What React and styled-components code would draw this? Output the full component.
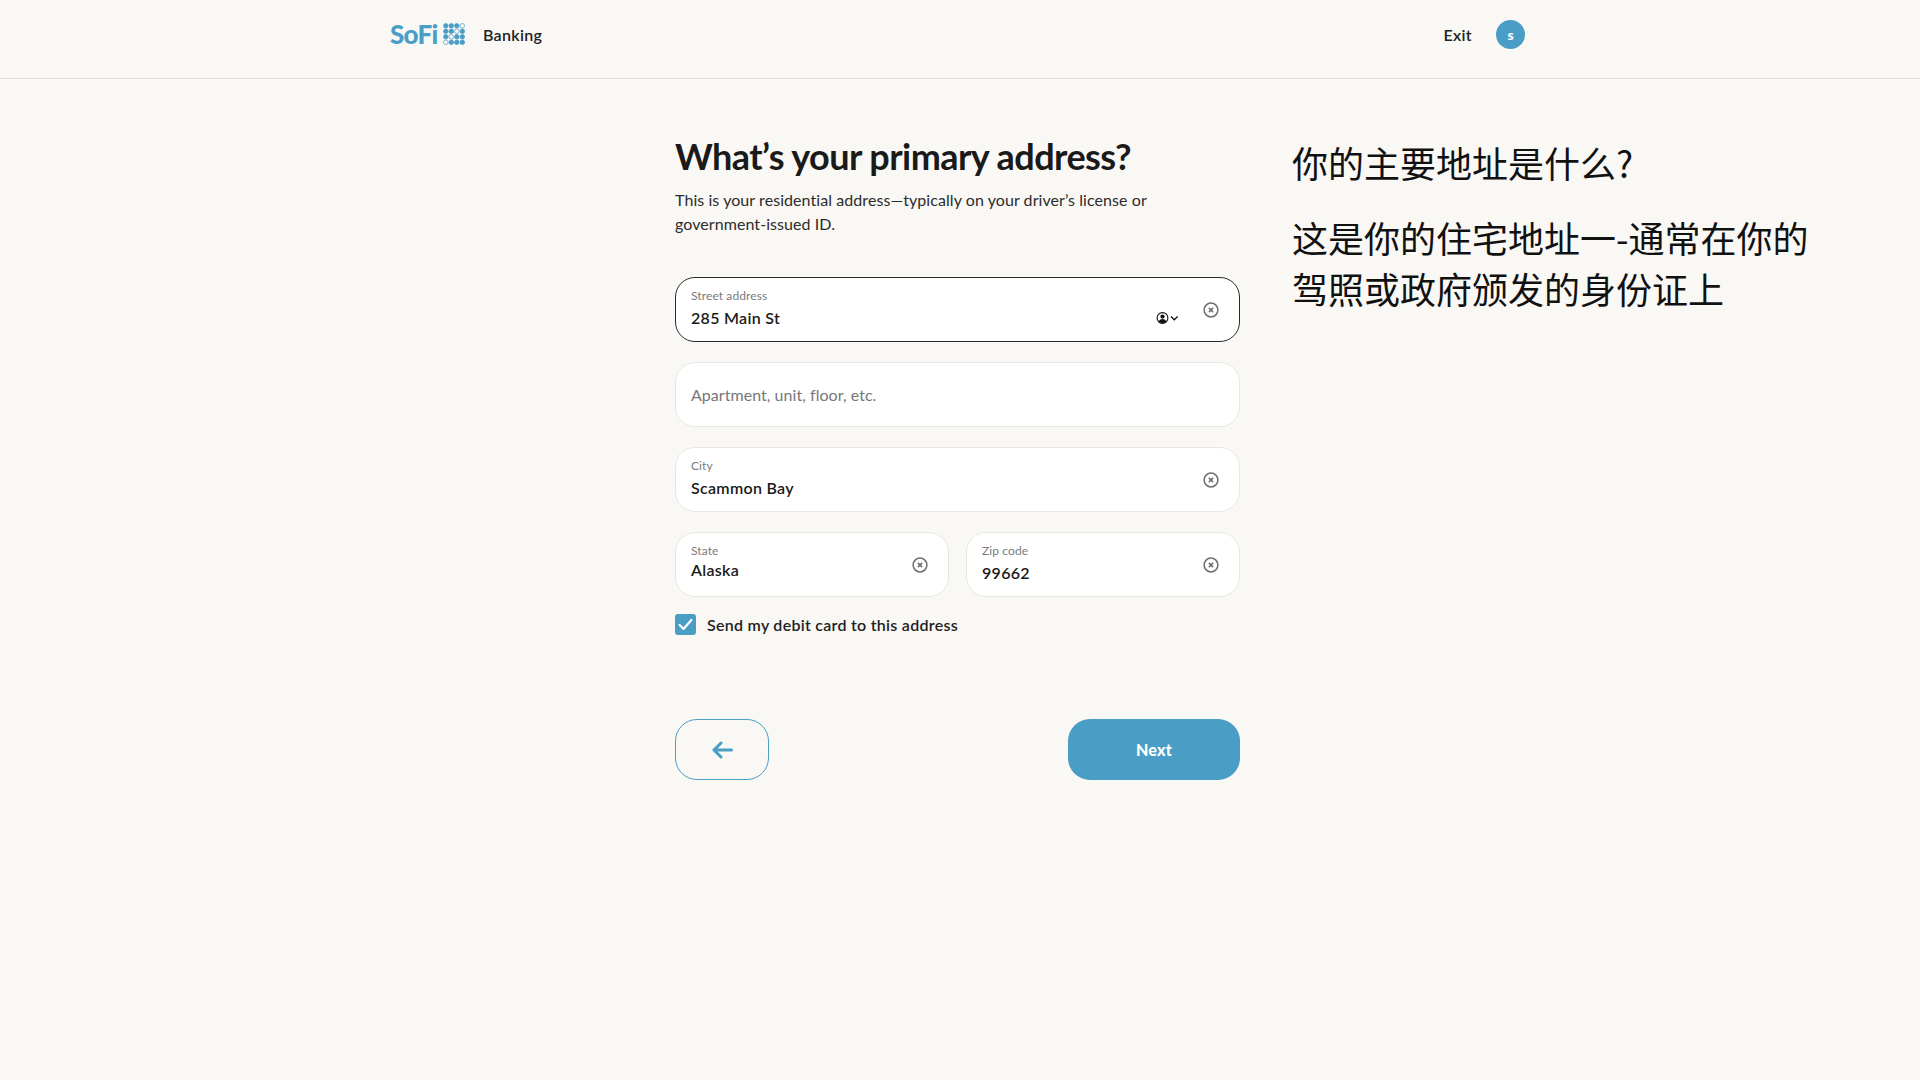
import React from "react";
import styled, { createGlobalStyle } from "styled-components";

const GlobalStyle = createGlobalStyle`
  html, body {
    margin: 0;
    min-height: 100%;
    background: #f9f8f5;
  }
  body {
    font-family: "Lato", "Noto Sans CJK SC", sans-serif;
    color: #1a1a1a;
  }
`;

const Page = styled.div`
  min-height: 1080px;
  background: #f9f8f5;
`;

const Header = styled.header`
  height: 79px;
  box-sizing: border-box;
  border-bottom: 1px solid #e1e0dc;
  padding: 0 395px 10px 390px;
  display: flex;
  align-items: center;
  justify-content: space-between;
`;

const HeaderSide = styled.div`
  display: flex;
  align-items: center;
  gap: ${props => props.gap}px;
`;

const LogoWrap = styled.div`
  display: flex;
  align-items: center;
  gap: 5px;
  width: 76px;
`;

const LogoText = styled.span`
  font-size: 26px;
  font-weight: 900;
  letter-spacing: -0.7px;
  color: #4a9ec6;
`;

const HeaderLink = styled.span`
  font-size: 16px;
  font-weight: 600;
  letter-spacing: 0.3px;
  color: #222;
`;

const BrandLink = styled(HeaderLink)`
  margin-left: 1px;
`;

const Avatar = styled.div`
  width: 29px;
  height: 29px;
  border-radius: 50%;
  background: #4a9ec6;
  color: #fff;
  font-size: 14px;
  font-weight: 900;
  display: flex;
  align-items: center;
  justify-content: center;
`;

const Main = styled.main`
  display: flex;
  gap: 52px;
  padding: 52px 0 0 675px;
`;

const FormColumn = styled.div`
  width: 565px;
`;

const Heading = styled.h1`
  margin: 0;
  font-size: 36px;
  line-height: 50px;
  font-weight: 700;
  letter-spacing: -0.55px;
  color: #1a1a1a;
`;

const Lead = styled.p`
  margin: 7px 0 0;
  font-size: 16px;
  line-height: 24px;
  letter-spacing: 0.07px;
  color: #2c2c2c;
`;

const Fields = styled.div`
  margin-top: 41px;
  display: flex;
  flex-direction: column;
  gap: 20px;
`;

const FieldRow = styled.div`
  display: grid;
  grid-template-columns: 1fr 1fr;
  gap: 17px;
`;

const FieldBox = styled.div`
  height: 65px;
  box-sizing: border-box;
  background: #fff;
  border: 1px solid ${props => props.active ? "#2a2a2a" : "#e8e7e3"};
  border-radius: 20px;
  padding: 0 20px 0 15px;
  display: flex;
  align-items: center;
  gap: 23px;
`;

const FieldText = styled.div`
  flex: 1;
  min-width: 0;
  align-self: flex-start;
  padding-top: 10px;
`;

const FieldLabel = styled.div`
  font-size: 12px;
  line-height: 16px;
  letter-spacing: 0.1px;
  color: #7b7b7b;
`;

const FieldValue = styled.div`
  margin-top: ${props => props.offset}px;
  font-size: 16px;
  line-height: 20px;
  font-weight: 600;
  letter-spacing: 0.3px;
  color: #1a1a1a;
`;

const Placeholder = styled.div`
  font-size: 16px;
  letter-spacing: 0.04px;
  color: #777;
`;

const AutofillIcon = styled.div`
  display: flex;
  align-items: center;
  margin-top: 16px;
`;

const CheckRow = styled.label`
  margin-top: 17px;
  display: flex;
  align-items: center;
  gap: 11px;
`;

const CheckBox = styled.span`
  width: 21px;
  height: 21px;
  border-radius: 3px;
  background: #4a9ec6;
  display: flex;
  align-items: center;
  justify-content: center;
`;

const CheckText = styled.span`
  font-size: 16px;
  font-weight: 600;
  letter-spacing: 0.27px;
  color: #222;
`;

const Actions = styled.div`
  margin-top: 84px;
  display: flex;
  justify-content: space-between;
`;

const BackButton = styled.button`
  width: 94px;
  height: 61px;
  border: 1px solid #4a9ec6;
  border-radius: 22px;
  background: transparent;
  display: flex;
  align-items: center;
  justify-content: center;
  padding: 0;
`;

const NextButton = styled.button`
  width: 172px;
  height: 61px;
  border: 0;
  border-radius: 22px;
  background: #4a9ec6;
  color: #fff;
  font-family: inherit;
  font-size: 16px;
  font-weight: 900;
  letter-spacing: 0.2px;
`;

const Translation = styled.div`
  width: 530px;
  padding-top: 6px;
  font-family: "Noto Sans CJK SC", sans-serif;
  font-size: 36px;
  line-height: 51px;
  color: #111;
`;

const TranslationBlock = styled.p`
  margin: 0 0 24px;
`;

const dots = [
  [1, 1, 1, 0],
  [1, 1, 0, 1],
  [1, 0, 1, 1],
  [0, 1, 1, 1],
];

const LogoDots = () => (
  <svg width="22" height="22" viewBox="0 0 22 22">
    {dots.map((row, y) =>
      row.map((filled, x) => (
        <circle
          key={`${x}-${y}`}
          cx={2.8 + x * 5.5}
          cy={2.8 + y * 5.5}
          r="2.3"
          fill={filled ? "#4a9ec6" : "none"}
          stroke="#4a9ec6"
          strokeWidth="0.7"
        />
      ))
    )}
  </svg>
);

const ClearIcon = () => (
  <svg width="16" height="16" viewBox="0 0 16 16" fill="none" stroke="#6f6f6f">
    <circle cx="8" cy="8" r="6.9" strokeWidth="1.5" />
    <path d="M5.9 5.9l4.2 4.2M10.1 5.9l-4.2 4.2" strokeWidth="1.6" />
  </svg>
);

const AutofillGlyph = () => (
  <svg width="24" height="14" viewBox="0 0 24 14" fill="none">
    <circle cx="6.5" cy="7" r="5.4" stroke="#111" strokeWidth="1.1" />
    <circle cx="6.5" cy="5.6" r="2.1" fill="#111" />
    <path d="M2.8 10.4c.8-1.7 2.1-2.4 3.7-2.4s2.9.7 3.7 2.4c-1 1-2.3 1.5-3.7 1.5s-2.7-.5-3.7-1.5z" fill="#111" />
    <path d="M15 5.5l3.3 3.3 3.3-3.3" stroke="#111" strokeWidth="1.3" />
  </svg>
);

const CheckMark = () => (
  <svg width="15" height="13" viewBox="0 0 15 13" fill="none">
    <path d="M1.6 7l3.9 3.9 7.9-9" stroke="#fff" strokeWidth="2.2" strokeLinecap="round" strokeLinejoin="round" />
  </svg>
);

const BackArrow = () => (
  <svg width="21" height="18" viewBox="0 0 21 18" fill="none" stroke="#4a9ec6" strokeWidth="3" strokeLinecap="round" strokeLinejoin="round">
    <path d="M19.5 9H2M9 2L2 9l7 7" />
  </svg>
);

const Field = ({ label, value, offset = 4, active, autofill }) => (
  <FieldBox active={active}>
    <FieldText>
      <FieldLabel>{label}</FieldLabel>
      <FieldValue offset={offset}>{value}</FieldValue>
    </FieldText>
    {autofill && <AutofillIcon><AutofillGlyph /></AutofillIcon>}
    <ClearIcon />
  </FieldBox>
);

export default function App() {
  return (
    <Page>
      <GlobalStyle />
      <Header>
        <HeaderSide gap={16}>
          <LogoWrap>
            <LogoText>SoFi</LogoText>
            <LogoDots />
          </LogoWrap>
          <BrandLink>Banking</BrandLink>
        </HeaderSide>
        <HeaderSide gap={24}>
          <HeaderLink>Exit</HeaderLink>
          <Avatar>s</Avatar>
        </HeaderSide>
      </Header>
      <Main>
        <FormColumn>
          <Heading>What’s your primary address?</Heading>
          <Lead>
            This is your residential address—typically on your driver’s license or
            <br />
            government-issued ID.
          </Lead>
          <Fields>
            <Field active autofill label="Street address" value="285 Main St" />
            <FieldBox>
              <Placeholder>Apartment, unit, floor, etc.</Placeholder>
            </FieldBox>
            <Field label="City" value="Scammon Bay" />
            <FieldRow>
              <Field label="State" value="Alaska" offset={1} />
              <Field label="Zip code" value="99662" />
            </FieldRow>
          </Fields>
          <CheckRow>
            <CheckBox><CheckMark /></CheckBox>
            <CheckText>Send my debit card to this address</CheckText>
          </CheckRow>
          <Actions>
            <BackButton><BackArrow /></BackButton>
            <NextButton>Next</NextButton>
          </Actions>
        </FormColumn>
        <Translation>
          <TranslationBlock>你的主要地址是什么?</TranslationBlock>
          <TranslationBlock>这是你的住宅地址一-通常在你的驾照或政府颁发的身份证上</TranslationBlock>
        </Translation>
      </Main>
    </Page>
  );
}
